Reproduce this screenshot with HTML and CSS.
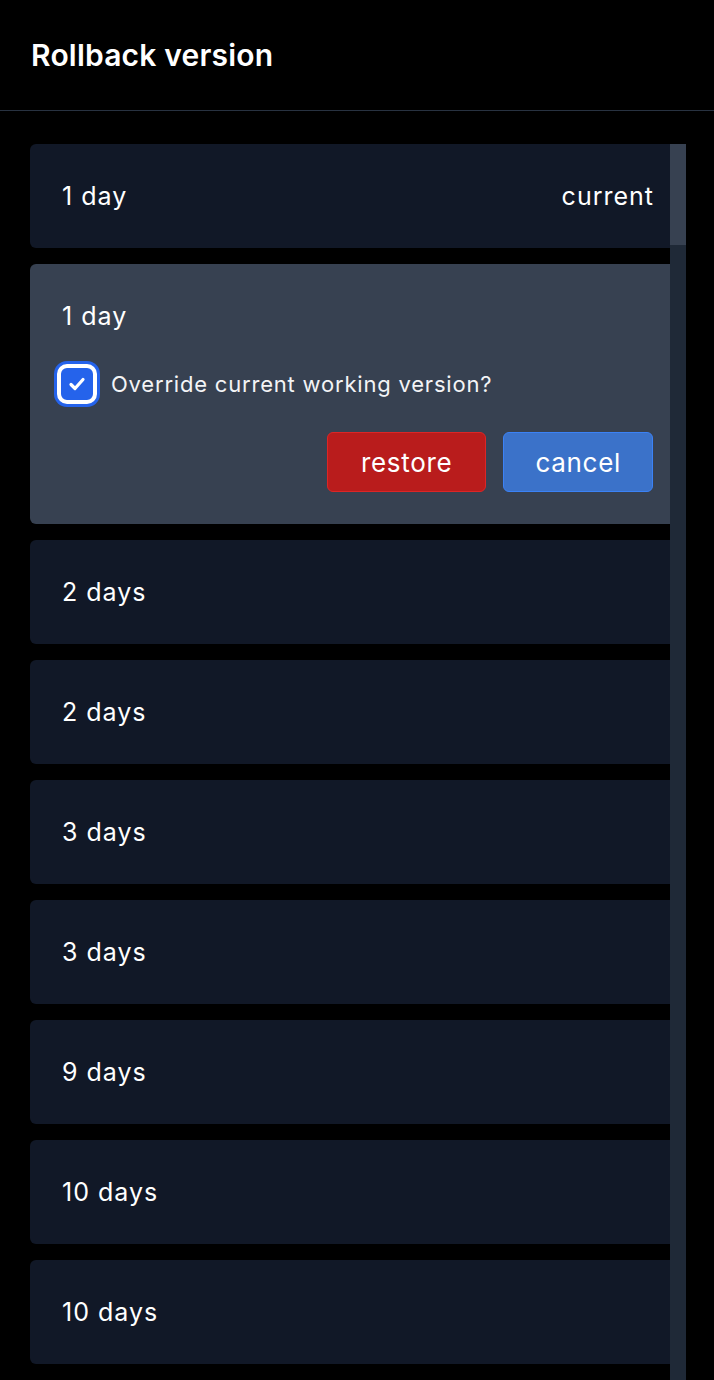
FILE: index.html
```html
<!DOCTYPE html>
<html>
<head>
<meta charset="utf-8">
<link rel="stylesheet" href="styles.css">
</head>
<body>
<div class="panel">
  <header class="header"><h1 class="title">Rollback version</h1></header>
  <div class="body">
    <div class="list">
      <div class="item"><span>1 day</span><span>current</span></div>
      <div class="item open">
        <div class="row"><span>1 day</span></div>
        <label class="check">
          <span class="box"><svg viewBox="0 0 24 24" width="24" height="24"><path d="M6 12.5l4 4 8-9" fill="none" stroke="#fff" stroke-width="3.2" stroke-linecap="round" stroke-linejoin="round"/></svg></span>
          <span class="check-label">Override current working version?</span>
        </label>
        <div class="actions">
          <button class="btn restore">restore</button>
          <button class="btn cancel">cancel</button>
        </div>
      </div>
      <div class="item"><span>2 days</span></div>
      <div class="item"><span>2 days</span></div>
      <div class="item"><span>3 days</span></div>
      <div class="item"><span>3 days</span></div>
      <div class="item"><span>9 days</span></div>
      <div class="item"><span>10 days</span></div>
      <div class="item"><span>10 days</span></div>
    </div>
    <div class="scrollbar"><div class="thumb"></div></div>
  </div>
</div>
</body>
</html>
```

FILE: styles.css
```css
html, body {
  margin: 0;
  padding: 0;
  background: #000;
  height: 1380px;
  overflow: hidden;
}
.panel {
  font-family: Inter, "Noto Sans", sans-serif;
  color: #fff;
}
.header {
  height: 110px;
  border-bottom: 1px solid #283241;
  display: flex;
  align-items: center;
  padding-left: 31px;
}
.title {
  margin: 0;
  font-size: 30px;
  font-weight: 600;
  letter-spacing: 0.2px;
}
.body {
  display: flex;
  padding: 33px 0 0 30px;
}
.list {
  width: 640px;
  display: flex;
  flex-direction: column;
  gap: 16px;
}
.item {
  background: #111827;
  border-radius: 6px 0 0 6px;
  height: 104px;
  box-sizing: border-box;
  padding: 0 16px 0 32px;
  display: flex;
  align-items: center;
  justify-content: space-between;
  font-size: 25px;
  letter-spacing: 1px;
}
.item.open {
  background: #374151;
  height: auto;
  display: block;
  padding: 32px 17px 32px 32px;
}
.row {
  height: 40px;
  display: flex;
  align-items: center;
}
.check {
  display: flex;
  align-items: center;
  margin-top: 28px;
  margin-left: -5px;
  gap: 14px;
}
.box {
  width: 40px;
  height: 40px;
  box-sizing: border-box;
  border-radius: 10px;
  background: #2563eb;
  border: 4px solid #fff;
  box-shadow: 0 0 0 3px #2563eb;
  display: flex;
  align-items: center;
  justify-content: center;
}
.check-label {
  font-size: 22px;
  letter-spacing: 0.8px;
  color: #f3f4f6;
}
.actions {
  display: flex;
  justify-content: flex-end;
  gap: 17px;
  margin-top: 28px;
}
.btn {
  font-family: Inter, "Noto Sans", sans-serif;
  font-size: 26px;
  letter-spacing: 0.7px;
  color: #fff;
  height: 60px;
  border-radius: 6px;
  padding: 0 33px;
}
.restore {
  background: #b91c1c;
  border: 1px solid #dc2626;
}
.cancel {
  background: #3b72c9;
  border: 1px solid #3b82f6;
  padding: 0 31px;
}
.scrollbar {
  width: 16px;
  height: 1236px;
  background: #1f2937;
}
.thumb {
  height: 101px;
  background: #374151;
}
```
